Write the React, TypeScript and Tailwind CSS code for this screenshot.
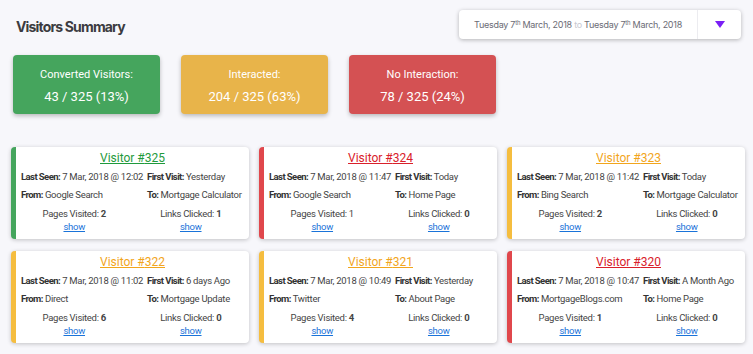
import { ReactNode } from "react";

type Tone = "green" | "yellow" | "red";

interface Visitor {
  id: number;
  tone: Tone;
  lastSeen: string;
  firstVisit: string;
  from: string;
  to: string;
  pages: number;
  links: number;
  boldPages?: boolean;
}

const visitors: Visitor[] = [
  { id: 325, tone: "green", lastSeen: "7 Mar, 2018 @ 12:02", firstVisit: "Yesterday", from: "Google Search", to: "Mortgage Calculator", pages: 2, links: 1, boldPages: true },
  { id: 324, tone: "red", lastSeen: "7 Mar, 2018 @ 11:47", firstVisit: "Today", from: "Google Search", to: "Home Page", pages: 1, links: 0 },
  { id: 323, tone: "yellow", lastSeen: "7 Mar, 2018 @ 11:42", firstVisit: "Today", from: "Bing Search", to: "Mortgage Calculator", pages: 2, links: 0, boldPages: true },
  { id: 322, tone: "yellow", lastSeen: "7 Mar, 2018 @ 11:02", firstVisit: "6 days Ago", from: "Direct", to: "Mortgage Update", pages: 6, links: 0, boldPages: true },
  { id: 321, tone: "yellow", lastSeen: "7 Mar, 2018 @ 10:49", firstVisit: "Yesterday", from: "Twitter", to: "About Page", pages: 4, links: 0, boldPages: true },
  { id: 320, tone: "red", lastSeen: "7 Mar, 2018 @ 10:47", firstVisit: "A Month Ago", from: "MortgageBlogs.com", to: "Home Page", pages: 1, links: 0, boldPages: true },
];

const borderTone: Record<Tone, string> = {
  green: "border-l-[#45a55d]",
  yellow: "border-l-[#f5bd3f]",
  red: "border-l-[#e0474c]",
};

const titleTone: Record<Tone, string> = {
  green: "text-[#1f9a3c]",
  yellow: "text-[#f2a51c]",
  red: "text-[#d9202a]",
};

function StatBox({ color, label, value }: { color: string; label: string; value: string }) {
  return (
    <div className={`${color} w-[147px] h-[59px] rounded-[4px] shadow-[0_2px_4px_rgba(0,0,0,0.25)] flex flex-col items-center justify-center text-white font-['Roboto','Liberation_Sans',sans-serif]`}>
      <div className="text-[11px] leading-[14px] mt-[3px]">{label}</div>
      <div className="text-[13px] leading-[16px] mt-[7px]">{value}</div>
    </div>
  );
}

function Field({ label, children }: { label: string; children: ReactNode }) {
  return (
    <div className="whitespace-nowrap">
      <span className="font-bold tracking-[-0.06em] text-[#333]">{label}:</span>{" "}
      <span>{children}</span>
    </div>
  );
}

function VisitorCard({ v }: { v: Visitor }) {
  return (
    <div className={`bg-white rounded-[4px] border-l-[5px] ${borderTone[v.tone]} shadow-[0_1px_4px_rgba(0,0,0,0.22)] h-[92px] pt-[3px] text-[9.5px] tracking-[-0.03em] text-[#444] font-['Roboto','Liberation_Sans',sans-serif]`}>
      <div className="text-center leading-[16px]">
        <span className={`${titleTone[v.tone]} underline text-[12px] tracking-normal`}>Visitor #{v.id}</span>
      </div>
      <div className="grid grid-cols-[126px_1fr] pl-[5px] mt-[3px] leading-[13px] gap-y-[5px]">
        <Field label="Last Seen">{v.lastSeen}</Field>
        <Field label="First Visit">{v.firstVisit}</Field>
        <Field label="From">{v.from}</Field>
        <Field label="To">{v.to}</Field>
      </div>
      <div className="grid grid-cols-2 mt-[6px] leading-[13px] text-center">
        <div>
          <div>Pages Visited: {v.boldPages ? <b>{v.pages}</b> : v.pages}</div>
          <a href="#" className="text-[#1a73d9] underline">show</a>
        </div>
        <div>
          <div>Links Clicked: <b>{v.links}</b></div>
          <a href="#" className="text-[#1a73d9] underline">show</a>
        </div>
      </div>
    </div>
  );
}

export default function App() {
  return (
    <div className="min-h-[354px] bg-[#f7f7fb] font-['Inter','Liberation_Sans',sans-serif]">
      <div className="flex items-start justify-between pl-[16px] pr-[12px] pt-[10px]">
        <h1 className="mt-[9px] text-[14px] leading-[16px] font-bold tracking-[-0.06em] text-[#3b3b40]">Visitors Summary</h1>
        <div className="flex h-[29px] w-[282px] bg-white rounded-[4px] shadow-[0_1px_4px_rgba(0,0,0,0.28)]">
          <div className="flex-1 flex items-center justify-center text-[9px] text-[#6b6b75] tracking-[-0.03em] whitespace-nowrap">
            <span>
              Tuesday 7<sup className="text-[6px]">th</sup> March, 2018 <span className="text-[#c8c8d0]">to</span> Tuesday 7<sup className="text-[6px]">th</sup> March, 2018
            </span>
          </div>
          <div className="w-[44px] border-l border-[#ececf0] flex items-center justify-center">
            <svg width="10" height="7" viewBox="0 0 10 7">
              <path d="M0 0 L10 0 L5 7 Z" fill="#7a1ff5" />
            </svg>
          </div>
        </div>
      </div>

      <div className="flex gap-[21px] pl-[13px] mt-[16px]">
        <StatBox color="bg-[#45a55d]" label="Converted Visitors:" value="43 / 325 (13%)" />
        <StatBox color="bg-[#e8b44a]" label="Interacted:" value="204 / 325 (63%)" />
        <StatBox color="bg-[#d45153]" label="No Interaction:" value="78 / 325 (24%)" />
      </div>

      <div className="grid grid-cols-3 gap-x-[10px] gap-y-[12px] pr-[8px] pl-[11px] mt-[33px]">
        {visitors.map((v) => (
          <VisitorCard key={v.id} v={v} />
        ))}
      </div>
    </div>
  );
}
